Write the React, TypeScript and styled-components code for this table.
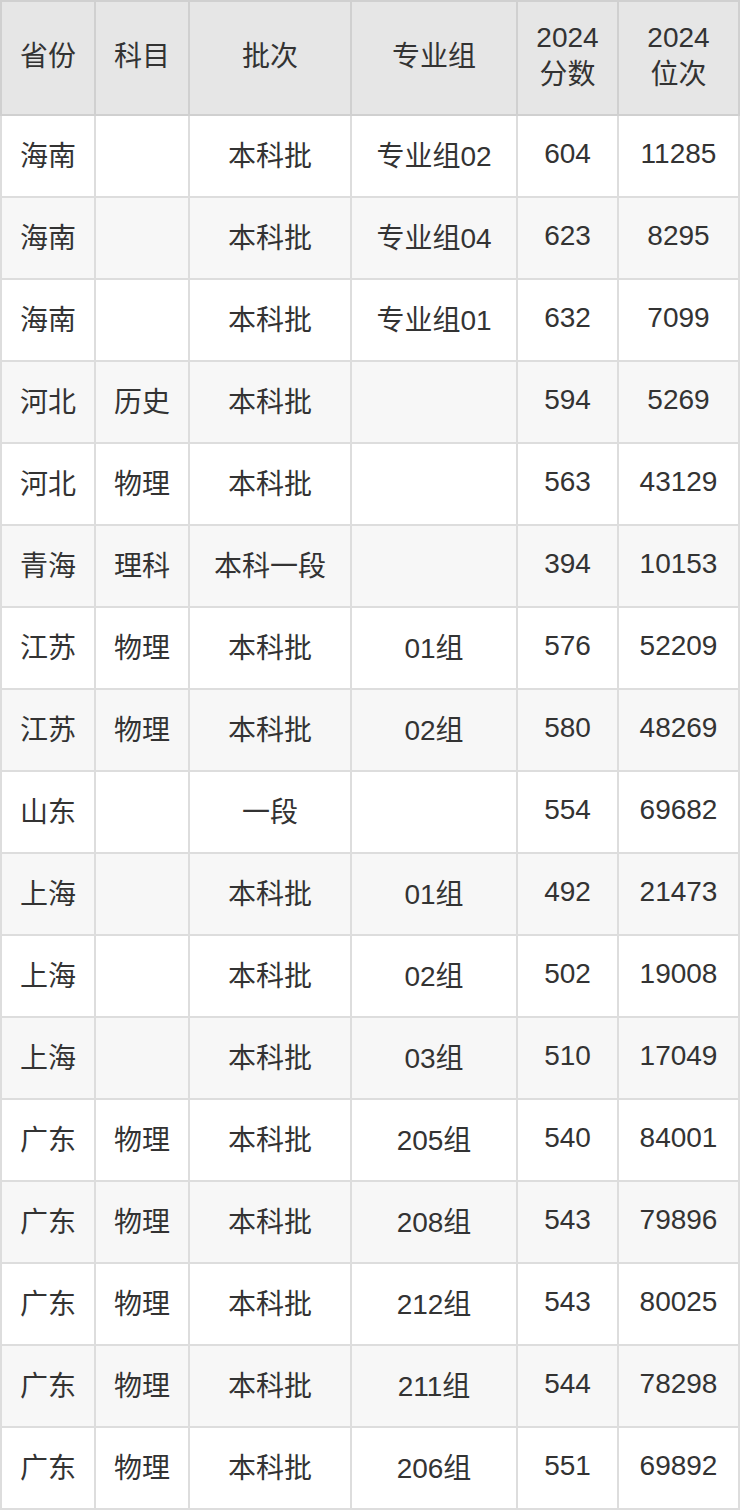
import React from "react"
import styled, { createGlobalStyle } from "styled-components"

const GlobalStyle = createGlobalStyle`
    html, body {
        margin: 0;
        padding: 0;
        background: #ffffff;
    }
    body {
        font-family: "Liberation Sans", "Noto Sans CJK SC", sans-serif;
        color: #333333;
    }
`

const StyledTable = styled.div`
    display: grid;
    grid-template-columns: 96px 94px 162px 166px 101px 121px;
    width: 740px;
`

const StyledHeadCell = styled.div<{ $first?: boolean }>`
    box-sizing: border-box;
    height: 116px;
    display: flex;
    align-items: center;
    justify-content: center;
    text-align: center;
    padding-bottom: 4px;
    background: #e6e6e6;
    border-top: 2px solid #d0d0d0;
    border-right: 2px solid #d0d0d0;
    border-bottom: 2px solid #d0d0d0;
    border-left: ${({ $first }) => ($first ? "2px solid #d0d0d0" : "none")};
    font-size: 28px;
    line-height: 37px;
    color: #333333;
`

const StyledCell = styled.div<{ $first?: boolean; $odd?: boolean }>`
    box-sizing: border-box;
    height: 82px;
    display: flex;
    align-items: center;
    justify-content: center;
    padding-bottom: 4px;
    background: ${({ $odd }) => ($odd ? "#f7f7f7" : "#ffffff")};
    border-right: 2px solid #dddddd;
    border-bottom: 2px solid #dddddd;
    border-left: ${({ $first }) => ($first ? "2px solid #dddddd" : "none")};
    font-size: 28px;
    color: #333333;
    white-space: nowrap;
`

const headers = ["省份", "科目", "批次", "专业组", "2024\n分数", "2024\n位次"]

const rows: string[][] = [
    ["海南", "", "本科批", "专业组02", "604", "11285"],
    ["海南", "", "本科批", "专业组04", "623", "8295"],
    ["海南", "", "本科批", "专业组01", "632", "7099"],
    ["河北", "历史", "本科批", "", "594", "5269"],
    ["河北", "物理", "本科批", "", "563", "43129"],
    ["青海", "理科", "本科一段", "", "394", "10153"],
    ["江苏", "物理", "本科批", "01组", "576", "52209"],
    ["江苏", "物理", "本科批", "02组", "580", "48269"],
    ["山东", "", "一段", "", "554", "69682"],
    ["上海", "", "本科批", "01组", "492", "21473"],
    ["上海", "", "本科批", "02组", "502", "19008"],
    ["上海", "", "本科批", "03组", "510", "17049"],
    ["广东", "物理", "本科批", "205组", "540", "84001"],
    ["广东", "物理", "本科批", "208组", "543", "79896"],
    ["广东", "物理", "本科批", "212组", "543", "80025"],
    ["广东", "物理", "本科批", "211组", "544", "78298"],
    ["广东", "物理", "本科批", "206组", "551", "69892"],
]

const App: React.FC = () => {
    return (
        <>
            <GlobalStyle />
            <StyledTable>
                {headers.map((h, i) => (
                    <StyledHeadCell key={i} $first={i === 0}>
                        <span>
                            {h.split("\n").map((line, j) => (
                                <React.Fragment key={j}>
                                    {j > 0 && <br />}
                                    {line}
                                </React.Fragment>
                            ))}
                        </span>
                    </StyledHeadCell>
                ))}
                {rows.map((row, r) =>
                    row.map((cell, c) => (
                        <StyledCell key={`${r}-${c}`} $first={c === 0} $odd={r % 2 === 1}>
                            {cell}
                        </StyledCell>
                    ))
                )}
            </StyledTable>
        </>
    )
}

export default App
